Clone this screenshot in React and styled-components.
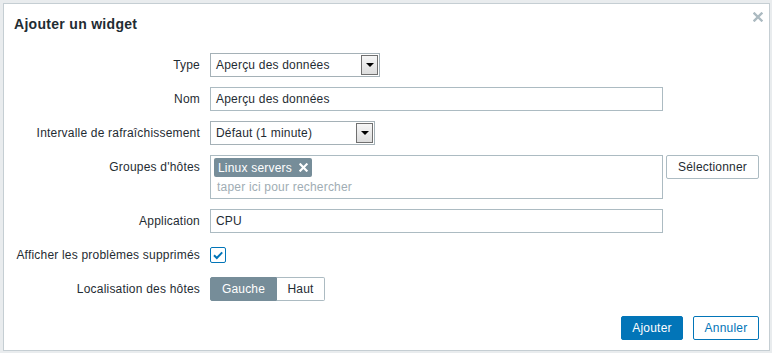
import React from 'react';
import styled, { createGlobalStyle } from 'styled-components';

const GlobalStyle = createGlobalStyle`
  html, body {
    margin: 0;
    padding: 0;
    background: #e9ecee;
  }
  body {
    font-family: "Liberation Sans", Arial, sans-serif;
    font-size: 12px;
    letter-spacing: 0.2px;
    color: #1f2c33;
  }
`;

const Dialog = styled.div`
  box-sizing: border-box;
  margin: 3px 0 0 3px;
  width: 767px;
  height: 348px;
  background: #fff;
  border: 1px solid #c5ced3;
  display: flex;
  flex-direction: column;
`;

const Header = styled.div`
  height: 44px;
  padding: 0 6px 0 10px;
  display: flex;
  align-items: flex-start;
  justify-content: space-between;
`;

const Title = styled.h4`
  margin: 11px 0 0;
  font-size: 14px;
  line-height: 18px;
  letter-spacing: 0.3px;
  font-weight: bold;
  color: #1f2c33;
`;

const CloseButton = styled.button`
  margin-top: 8px;
  padding: 0;
  border: 0;
  background: none;
  width: 10px;
  height: 10px;
  display: flex;
  align-items: center;
  justify-content: center;
  cursor: pointer;
`;

const Form = styled.div`
  padding-top: 5px;
  display: grid;
  grid-template-columns: 196px 1fr;
  column-gap: 10px;
  row-gap: 10px;
`;

const Label = styled.label`
  height: 24px;
  display: flex;
  align-items: center;
  justify-content: flex-end;
  white-space: nowrap;
  align-self: start;
`;

const Field = styled.div`
  display: flex;
  align-items: ${p => (p.$top ? 'flex-start' : 'center')};
  min-height: 24px;
  gap: 3px;
`;

const SelectBox = styled.div`
  box-sizing: border-box;
  width: ${p => p.$width}px;
  height: 24px;
  border: 1px solid #a5b1b7;
  background: #fff;
  display: flex;
  align-items: center;
  justify-content: space-between;
  padding: 0 1px 0 5px;
`;

const SelectArrow = styled.span`
  box-sizing: border-box;
  width: 17px;
  height: 20px;
  border: 1px solid #707070;
  background: linear-gradient(#f6f6f6, #dddddd);
  display: flex;
  align-items: center;
  justify-content: center;
  &::after {
    content: '';
    border-left: 4px solid transparent;
    border-right: 4px solid transparent;
    border-top: 4px solid #000;
  }
`;

const TextInput = styled.div`
  box-sizing: border-box;
  width: 453px;
  height: 24px;
  border: 1px solid #acbbc2;
  padding: 0 5px;
  display: flex;
  align-items: center;
`;

const MultiSelect = styled.div`
  box-sizing: border-box;
  width: 453px;
  height: 44px;
  border: 1px solid #acbbc2;
  padding: 2px 2px 0 3px;
`;

const Tag = styled.span`
  display: inline-flex;
  align-items: center;
  height: 19px;
  padding: 0 4px 0 4px;
  gap: 7px;
  background: #768d99;
  color: #fff;
  border-radius: 2px;
`;

const Placeholder = styled.div`
  height: 20px;
  line-height: 20px;
  padding-left: 3px;
  color: #a0adb4;
`;

const Button = styled.button`
  box-sizing: border-box;
  width: ${p => p.$width}px;
  height: 24px;
  padding: 0;
  font-family: inherit;
  font-size: 12px;
  letter-spacing: inherit;
  border-radius: 2px;
  border: 1px solid ${p => (p.$variant === 'plain' ? '#acbbc2' : '#0275b8')};
  background: ${p => (p.$variant === 'primary' ? '#0275b8' : '#fff')};
  color: ${p =>
    p.$variant === 'primary' ? '#fff' : p.$variant === 'plain' ? '#1f2c33' : '#0275b8'};
  cursor: pointer;
`;

const Checkbox = styled.span`
  box-sizing: border-box;
  width: 16px;
  height: 16px;
  border: 1px solid #0275b8;
  border-radius: 2px;
  display: flex;
  align-items: center;
  justify-content: center;
`;

const Segmented = styled.div`
  display: flex;
  height: 24px;
`;

const Segment = styled.span`
  box-sizing: border-box;
  width: ${p => p.$width}px;
  height: 24px;
  display: flex;
  align-items: center;
  justify-content: center;
  border: 1px solid ${p => (p.$active ? '#768d99' : '#acbbc2')};
  background: ${p => (p.$active ? '#768d99' : '#fff')};
  color: ${p => (p.$active ? '#fff' : '#1f2c33')};
  border-radius: ${p => (p.$first ? '2px 0 0 2px' : '0 2px 2px 0')};
  ${p => (!p.$first ? 'border-left: 0;' : '')}
`;

const Footer = styled.div`
  margin-top: auto;
  padding: 0 10px 10px;
  display: flex;
  justify-content: flex-end;
  gap: 10px;
`;

const Cross = ({ size, color, width }) => (
  <svg width={size} height={size} viewBox="0 0 10 10">
    <path d="M1.5 1.5 L8.5 8.5 M8.5 1.5 L1.5 8.5" stroke={color} strokeWidth={width} strokeLinecap="square" />
  </svg>
);

export default function App() {
  return (
    <>
      <GlobalStyle />
      <Dialog>
        <Header>
          <Title>Ajouter un widget</Title>
          <CloseButton aria-label="Fermer">
            <Cross size={10} color="#acbac1" width={2.4} />
          </CloseButton>
        </Header>
        <Form>
          <Label>Type</Label>
          <Field>
            <SelectBox $width={170}>
              <span>Aperçu des données</span>
              <SelectArrow />
            </SelectBox>
          </Field>

          <Label>Nom</Label>
          <Field>
            <TextInput>Aperçu des données</TextInput>
          </Field>

          <Label>Intervalle de rafraîchissement</Label>
          <Field>
            <SelectBox $width={165}>
              <span>Défaut (1 minute)</span>
              <SelectArrow />
            </SelectBox>
          </Field>

          <Label>Groupes d'hôtes</Label>
          <Field $top>
            <MultiSelect>
              <Tag>
                Linux servers
                <Cross size={9} color="#fff" width={2.4} />
              </Tag>
              <Placeholder>taper ici pour rechercher</Placeholder>
            </MultiSelect>
            <Button $variant="plain" $width={93}>Sélectionner</Button>
          </Field>

          <Label>Application</Label>
          <Field>
            <TextInput>CPU</TextInput>
          </Field>

          <Label>Afficher les problèmes supprimés</Label>
          <Field>
            <Checkbox>
              <svg width="12" height="12" viewBox="0 0 12 12">
                <path d="M2 6.2 L4.8 9 L10.2 3.4" fill="none" stroke="#0275b8" strokeWidth="2" />
              </svg>
            </Checkbox>
          </Field>

          <Label>Localisation des hôtes</Label>
          <Field>
            <Segmented>
              <Segment $width={67} $active $first>Gauche</Segment>
              <Segment $width={48}>Haut</Segment>
            </Segmented>
          </Field>
        </Form>
        <Footer>
          <Button $variant="primary" $width={62}>Ajouter</Button>
          <Button $variant="outline" $width={66}>Annuler</Button>
        </Footer>
      </Dialog>
    </>
  );
}
